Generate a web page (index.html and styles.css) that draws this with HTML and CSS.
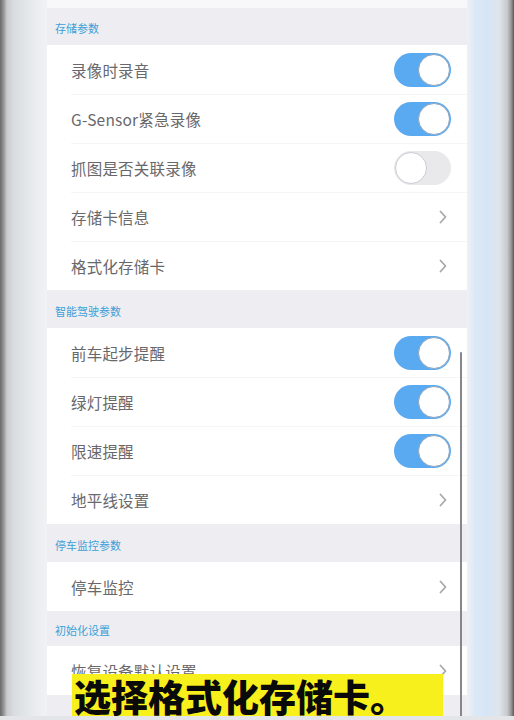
FILE: index.html
```html
<!DOCTYPE html>
<html lang="zh-CN">
<head>
<meta charset="utf-8">
<title>设置</title>
<link rel="stylesheet" href="styles.css">
</head>
<body>
<div class="frame">
  <div class="edge edge-left"></div>
  <div class="panel">
    <div class="top-band"></div>
    <div class="group-title first">存储参数</div>
    <div class="group">
      <div class="row"><span class="label">录像时录音</span><span class="toggle on"><span class="knob"></span></span></div>
      <div class="row"><span class="label">G-Sensor紧急录像</span><span class="toggle on"><span class="knob"></span></span></div>
      <div class="row"><span class="label">抓图是否关联录像</span><span class="toggle"><span class="knob"></span></span></div>
      <div class="row"><span class="label">存储卡信息</span><svg class="chev" viewBox="0 0 8 14" width="8" height="14"><path d="M1.5 1.5 L6.5 7 L1.5 12.5" fill="none" stroke="#a8a8ad" stroke-width="1.8" stroke-linecap="round" stroke-linejoin="round"/></svg></div>
      <div class="row"><span class="label">格式化存储卡</span><svg class="chev" viewBox="0 0 8 14" width="8" height="14"><path d="M1.5 1.5 L6.5 7 L1.5 12.5" fill="none" stroke="#a8a8ad" stroke-width="1.8" stroke-linecap="round" stroke-linejoin="round"/></svg></div>
    </div>
    <div class="group-title">智能驾驶参数</div>
    <div class="group">
      <div class="row"><span class="label">前车起步提醒</span><span class="toggle on"><span class="knob"></span></span></div>
      <div class="row"><span class="label">绿灯提醒</span><span class="toggle on"><span class="knob"></span></span></div>
      <div class="row"><span class="label">限速提醒</span><span class="toggle on"><span class="knob"></span></span></div>
      <div class="row"><span class="label">地平线设置</span><svg class="chev" viewBox="0 0 8 14" width="8" height="14"><path d="M1.5 1.5 L6.5 7 L1.5 12.5" fill="none" stroke="#a8a8ad" stroke-width="1.8" stroke-linecap="round" stroke-linejoin="round"/></svg></div>
    </div>
    <div class="group-title">停车监控参数</div>
    <div class="group">
      <div class="row"><span class="label">停车监控</span><svg class="chev" viewBox="0 0 8 14" width="8" height="14"><path d="M1.5 1.5 L6.5 7 L1.5 12.5" fill="none" stroke="#a8a8ad" stroke-width="1.8" stroke-linecap="round" stroke-linejoin="round"/></svg></div>
    </div>
    <div class="group-title short">初始化设置</div>
    <div class="group">
      <div class="row"><span class="label">恢复设备默认设置</span><svg class="chev" viewBox="0 0 8 14" width="8" height="14"><path d="M1.5 1.5 L6.5 7 L1.5 12.5" fill="none" stroke="#a8a8ad" stroke-width="1.8" stroke-linecap="round" stroke-linejoin="round"/></svg></div>
    </div>
    <div class="scrollbar"></div>
  </div>
  <div class="edge edge-right"></div>
  <div class="caption">选择格式化存储卡。</div>
  <div class="bottom-strip"></div>
</div>
</body>
</html>
```
FILE: styles.css
```css
html, body {
  margin: 0;
  padding: 0;
}
body {
  width: 514px;
  height: 720px;
  overflow: hidden;
  background: #f2f3f5;
  font-family: "Noto Sans CJK SC", "Noto Sans", sans-serif;
}
.frame {
  position: relative;
  display: flex;
  width: 514px;
  height: 720px;
  overflow: hidden;
}
.edge-left {
  width: 47px;
  flex: none;
  background:
    linear-gradient(to right, #6a6a6a 0, #8c8c8c 3px, #c9cbce 7px, #dadde0 14px, #e6e9ec 30px, #f1f2f4 47px);
}
.edge-right {
  flex: 1;
  background:
    linear-gradient(to right, #eef1f5 0, #dce8f6 8px, #d6e5f6 20px, #dfe5ec 32px, #c9cbce 40px, #9a9a9a 44px, #5a5a5a 47px);
}
.panel {
  position: relative;
  width: 420px;
  flex: none;
  background: #eeeef2;
  display: flex;
  flex-direction: column;
}
.top-band {
  height: 8px;
  background: #f8f8fa;
}
.group-title {
  height: 38px;
  box-sizing: border-box;
  padding: 15px 0 0 8px;
  font-size: 11px;
  line-height: 13px;
  color: #3d9fd8;
  background: #eeeef2;
}
.group-title.first {
  height: 37px;
  padding-top: 14px;
}
.group-title.short {
  height: 35px;
  padding-top: 13px;
}
.group {
  background: #ffffff;
}
.row {
  height: 49px;
  display: flex;
  align-items: center;
  justify-content: space-between;
  padding: 0 16px 0 24px;
  position: relative;
}
.row + .row::before {
  content: "";
  position: absolute;
  left: 24px;
  right: 0;
  top: 0;
  height: 1px;
  background: #f5f5f7;
}
.label {
  font-size: 15.5px;
  letter-spacing: 0.2px;
  color: #68686b;
}
.toggle {
  width: 57px;
  height: 34px;
  border-radius: 17px;
  background: #e9e9eb;
  box-sizing: border-box;
  display: flex;
  align-items: center;
  padding: 1px;
  justify-content: flex-start;
}
.toggle.on {
  background: #5aaaf1;
  justify-content: flex-end;
}
.knob {
  width: 32px;
  height: 32px;
  border-radius: 50%;
  background: #ffffff;
  box-sizing: border-box;
  border: 1.5px solid #c9ccd2;
}
.toggle.on .knob {
  border-color: #8fa4bd;
}
.chev {
  margin-right: 4px;
}
.scrollbar {
  position: absolute;
  left: 413px;
  top: 352px;
  width: 2px;
  height: 368px;
  background: #85878a;
  border-radius: 1px;
}
.caption {
  position: absolute;
  left: 72px;
  top: 674px;
  width: 371px;
  height: 42px;
  background: #f8f01c;
  box-sizing: border-box;
  padding-left: 2px;
  font-family: "Noto Sans CJK SC", sans-serif;
  font-weight: 900;
  font-size: 37px;
  line-height: 44px;
  color: #0a0a0a;
  white-space: nowrap;
  overflow: hidden;
}
.bottom-strip {
  position: absolute;
  left: 0;
  right: 0;
  bottom: 0;
  height: 4px;
  background: #e4e5e8;
}
```
